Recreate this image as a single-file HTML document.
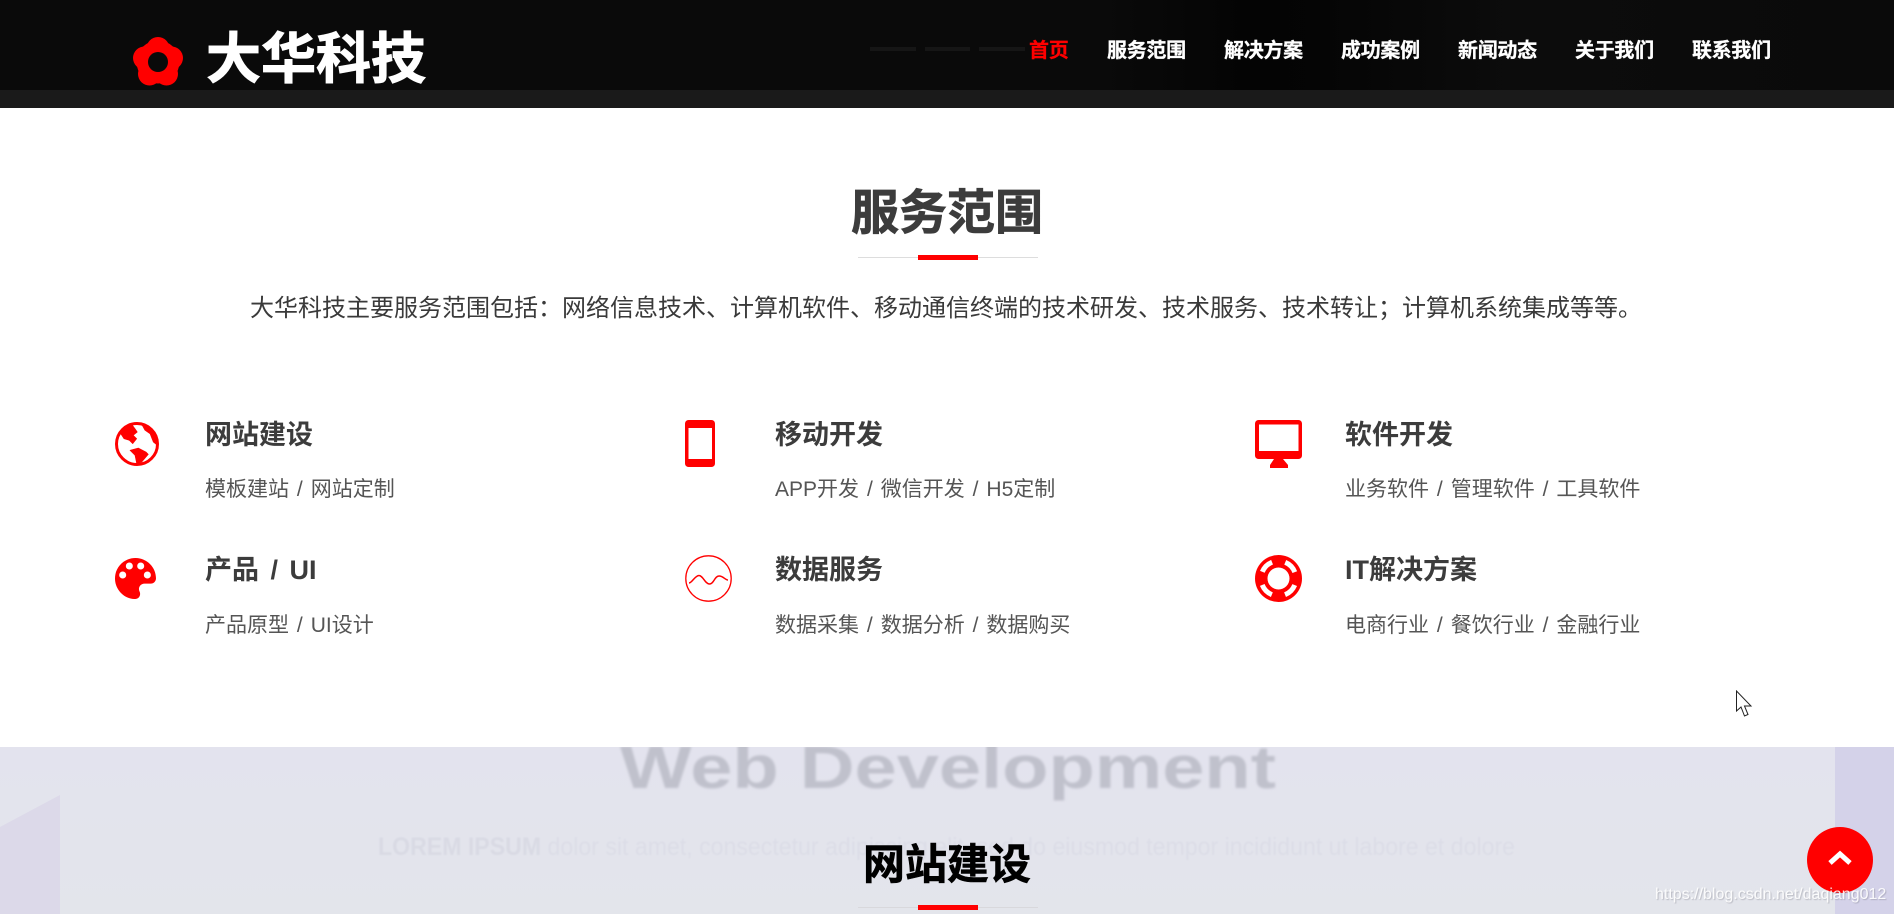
<!DOCTYPE html>
<html lang="zh">
<head>
<meta charset="utf-8">
<title>大华科技</title>
<style>
html,body{margin:0;padding:0;width:1894px;height:914px;overflow:hidden;background:#fff}
body{position:relative;font-family:"Liberation Sans","Noto Sans CJK SC",sans-serif}
.a{position:absolute;white-space:nowrap}
.hd{left:0;top:0;width:1894px;height:90px;background:linear-gradient(90deg,#0a0a0a 0,#0a0a0a 58%,#040404 66%,#050505 70%,#0c0c0c 80%,#0a0a0a 100%)}
.hd2{left:0;top:90px;width:1894px;height:18px;background:#1a1a1a}
.nav{top:36px;font-size:20px;line-height:30px;font-weight:700;color:#fff;letter-spacing:-.3px;-webkit-text-stroke:.3px currentColor}
.t{font-size:27px;line-height:30px;font-weight:700;color:#3c3c3c}
.s{font-size:21px;line-height:30px;color:#555;word-spacing:2.100px}
svg{position:absolute;display:block}
</style>
</head>
<body>
<div class="a hd"></div>
<div class="a hd2"></div>
<div class="a" style="left:870px;top:47px;width:46px;height:4px;background:#161616"></div>
<div class="a" style="left:925px;top:47px;width:45px;height:4px;background:#161616"></div>
<div class="a" style="left:979px;top:47px;width:46px;height:4px;background:#161616"></div>

<svg style="left:128px;top:32px" width="60" height="60" viewBox="0 0 60 60">
<g fill="#f00"><circle cx="30" cy="16.500" r="11.500"/><circle cx="16.500" cy="26" r="11.500"/><circle cx="43.500" cy="26" r="11.500"/><circle cx="21.500" cy="42" r="11.500"/><circle cx="38.500" cy="42" r="11.500"/><circle cx="30" cy="30" r="21.500"/></g>
<circle cx="30" cy="30" r="10" fill="#0a0a0a"/>
</svg>
<div class="a" style="left:206px;top:23px;font-size:55px;line-height:72px;font-weight:700;color:#fff;-webkit-text-stroke:1px #fff">大华科技</div>

<div class="a nav" style="left:1029px;color:#f00">首页</div>
<div class="a nav" style="left:1107px">服务范围</div>
<div class="a nav" style="left:1224px">解决方案</div>
<div class="a nav" style="left:1341px">成功案例</div>
<div class="a nav" style="left:1458px">新闻动态</div>
<div class="a nav" style="left:1575px">关于我们</div>
<div class="a nav" style="left:1692px">联系我们</div>

<div class="a" style="left:851px;top:179px;font-size:48px;line-height:70px;font-weight:700;color:#3c3c3c;-webkit-text-stroke:.7px #3c3c3c">服务范围</div>
<div class="a" style="left:858px;top:257px;width:180px;height:1px;background:#ddd"></div>
<div class="a" style="left:918px;top:255px;width:60px;height:5px;background:#f00"></div>
<div class="a" style="left:250px;top:291px;font-size:24px;line-height:36px;color:#3a3a3a">大华科技主要服务范围包括&#xFF1A;网络信息技术、计算机软件、移动通信终端的技术研发、技术服务、技术转让&#xFF1B;计算机系统集成等等。</div>

<!-- globe -->
<svg style="left:115px;top:422px" width="44" height="44" viewBox="0 0 44 44">
<circle cx="22" cy="22" r="20.500" fill="#fff" stroke="#f00" stroke-width="3"/>
<g fill="#f00" stroke="#f00" stroke-width=".6" stroke-linejoin="round">
<path d="M5.700 11.700L10 5L16.700 2.300L20 6.700L22.300 10L18.300 13.300L21.700 16.700L17.700 21.700L14.300 18.300L9 16.700Z"/>
<path d="M15 28.300L23.300 26L31 30L33.300 32.300L26.700 40L21.700 41.700L20 33.300Z"/>
<path d="M26.700 2.300L35 6.700L41.700 16.700L42.300 23.300L38.300 20L35 11.700L30 8.300Z"/>
</g>
</svg>
<div class="a t" style="left:205px;top:420px">网站建设</div>
<div class="a s" style="left:205px;top:475px">模板建站 / 网站定制</div>

<!-- phone -->
<svg style="left:685px;top:420px" width="30" height="47" viewBox="0 0 30 47">
<rect width="30" height="47" rx="3.500" fill="#f00"/><rect x="3.500" y="8" width="23.500" height="31" fill="#fff"/>
</svg>
<div class="a t" style="left:775px;top:420px">移动开发</div>
<div class="a s" style="left:775px;top:475px">APP开发 / 微信开发 / H5定制</div>

<!-- monitor -->
<svg style="left:1255px;top:420px" width="47" height="48" viewBox="0 0 47 48">
<rect width="47" height="39" rx="3.500" fill="#f00"/><rect x="4" y="4.500" width="39.500" height="26.500" fill="#fff"/>
<path fill="#f00" d="M19 39h9l5 6v3H15v-3z"/>
</svg>
<div class="a t" style="left:1345px;top:420px">软件开发</div>
<div class="a s" style="left:1345px;top:475px">业务软件 / 管理软件 / 工具软件</div>

<!-- palette -->
<svg style="left:115px;top:558px" width="41" height="41" viewBox="0 0 512 512">
<path fill="#f00" d="M204.300 5C104.900 24.400 24.800 104.300 5.200 203.400c-37 187 131.700 326.400 258.800 306.700 41.200-6.400 61.400-54.600 42.500-91.700-23.100-45.400 9.900-98.400 60.900-98.400h79.700c35.800 0 64.800-29.600 64.900-65.300C511.500 97.100 368.100-26.900 204.300 5z"/>
<g fill="#fff"><circle cx="96" cy="212" r="44"/><circle cx="179" cy="100" r="44"/><circle cx="321" cy="100" r="44"/><circle cx="404" cy="212" r="44"/></g>
</svg>
<div class="a t" style="left:205px;top:555px;word-spacing:4px">产品 / UI</div>
<div class="a s" style="left:205px;top:611px">产品原型 / UI设计</div>

<!-- wave -->
<svg style="left:685px;top:555px" width="47" height="47" viewBox="0 0 47 47">
<circle cx="23.500" cy="23.500" r="22.700" fill="#fff" stroke="#f00" stroke-width="1.300"/>
<path fill="none" stroke="#f00" stroke-width="1.500" d="M4 28C7 28 10 20.500 14 20.500S20 29 24.500 29 29.500 21 34 21 40 25 43 25"/>
</svg>
<div class="a t" style="left:775px;top:555px">数据服务</div>
<div class="a s" style="left:775px;top:611px">数据采集 / 数据分析 / 数据购买</div>

<!-- lifebuoy -->
<svg style="left:1255px;top:555px" width="47" height="47" viewBox="0 0 47 47">
<circle cx="23.500" cy="23.500" r="23.500" fill="#f00"/>
<circle cx="23.500" cy="23.500" r="17.500" fill="none" stroke="#fff" stroke-width="5" stroke-dasharray="14 13.500" stroke-dashoffset="-6.750"/>
<circle cx="23.500" cy="23.500" r="11" fill="#fff"/>
</svg>
<div class="a t" style="left:1345px;top:555px">IT解决方案</div>
<div class="a s" style="left:1345px;top:611px">电商行业 / 餐饮行业 / 金融行业</div>

<!-- cursor -->
<svg style="left:1735px;top:690px" width="20" height="28" viewBox="0 0 20 28">
<path d="M1.500 1V21L6 17L9.500 26L13 24.500L9.500 16H16Z" fill="#fff" stroke="#222" stroke-width="1"/>
</svg>

<!-- bottom band -->
<div class="a" style="left:0;top:747px;width:1894px;height:167px;overflow:hidden;background:linear-gradient(180deg,#e3e3ee,#e3e5eb)">
<svg style="left:0;top:0" width="1894" height="167" viewBox="0 0 1894 167">
<defs><filter id="b1"><feGaussianBlur stdDeviation="1.200"/></filter><filter id="b2"><feGaussianBlur stdDeviation=".9"/></filter></defs>
<path d="M0 80L60 48V167H0Z" fill="#dcd9e9"/>
<rect x="1835" y="0" width="59" height="167" fill="#d4d2e9"/>
<text x="620" y="41" font-family="Liberation Sans" font-size="60" font-weight="700" fill="#c0c1cc" filter="url(#b1)" textLength="656" lengthAdjust="spacingAndGlyphs">Web Development</text>
<text x="378" y="108" font-family="Liberation Sans" font-size="25" fill="#dcdde7" filter="url(#b2)" textLength="1137" lengthAdjust="spacingAndGlyphs"><tspan font-weight="700" fill="#d9dae4">LOREM IPSUM</tspan> dolor sit amet, consectetur adipiscing elit, sed do eiusmod tempor incididunt ut labore et dolore</text>
</svg>
</div>
<div class="a" style="left:863px;top:835px;font-size:42px;line-height:60px;font-weight:700;color:#000;-webkit-text-stroke:.6px #000">网站建设</div>
<div class="a" style="left:858px;top:907px;width:180px;height:1px;background:#d8d8dc"></div>
<div class="a" style="left:918px;top:905px;width:60px;height:5px;background:#f00"></div>

<!-- back to top -->
<div class="a" style="left:1807px;top:827px;width:66px;height:66px;border-radius:50%;background:#f00"></div>
<svg style="left:1826px;top:849px" width="28" height="18" viewBox="0 0 28 18">
<path d="M4 14L14 5L24 14" fill="none" stroke="#fff" stroke-width="5"/>
</svg>
<div class="a" style="left:1655px;top:885px;font-size:16px;line-height:20px;color:rgba(255,255,255,.9);text-shadow:1px 1px 1px rgba(110,110,120,.35)">https://blog.csdn.net/daqiang012</div>
</body>
</html>
